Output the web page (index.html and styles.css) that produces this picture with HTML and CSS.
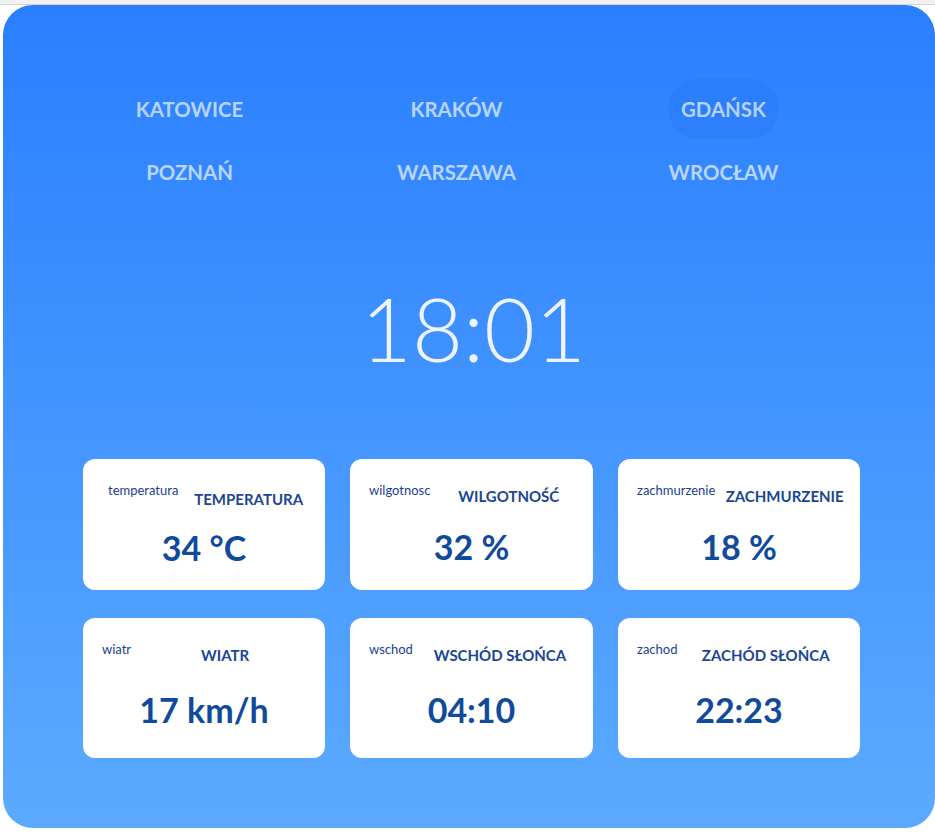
FILE: index.html
```html
<!DOCTYPE html>
<html lang="pl">
<head>
<meta charset="utf-8">
<title>Pogoda</title>
<link rel="stylesheet" href="styles.css">
</head>
<body>
<div class="topbar"></div>
<main class="app">
  <nav class="cities">
    <a class="city">KATOWICE</a>
    <a class="city">KRAKÓW</a>
    <a class="city city--active">GDAŃSK</a>
    <a class="city">POZNAŃ</a>
    <a class="city">WARSZAWA</a>
    <a class="city">WROCŁAW</a>
  </nav>
  <div class="clock">18:01</div>
  <section class="tiles">
    <div class="tile tile--temp">
      <div class="tile-head"><span class="icon-alt">temperatura</span><h3>TEMPERATURA</h3></div>
      <div class="tile-value">34 °C</div>
    </div>
    <div class="tile">
      <div class="tile-head"><span class="icon-alt">wilgotnosc</span><h3>WILGOTNOŚĆ</h3></div>
      <div class="tile-value">32 %</div>
    </div>
    <div class="tile">
      <div class="tile-head"><span class="icon-alt">zachmurzenie</span><h3>ZACHMURZENIE</h3></div>
      <div class="tile-value">18 %</div>
    </div>
    <div class="tile">
      <div class="tile-head"><span class="icon-alt">wiatr</span><h3>WIATR</h3></div>
      <div class="tile-value">17 km/h</div>
    </div>
    <div class="tile">
      <div class="tile-head"><span class="icon-alt">wschod</span><h3>WSCHÓD SŁOŃCA</h3></div>
      <div class="tile-value">04:10</div>
    </div>
    <div class="tile">
      <div class="tile-head"><span class="icon-alt">zachod</span><h3>ZACHÓD SŁOŃCA</h3></div>
      <div class="tile-value">22:23</div>
    </div>
  </section>
</main>
</body>
</html>
```
FILE: styles.css
```css
* { box-sizing: border-box; }
html, body { margin: 0; padding: 0; background: #fff; }
body { font-family: Lato, "Open Sans", sans-serif; }

.topbar {
  height: 5px;
  background: #f1f1f1;
  border-bottom: 1px solid #d6d6d6;
}

.app {
  margin-left: 3px;
  width: 932px;
  height: 823px;
  border-radius: 30px;
  background: linear-gradient(to bottom, #2a7fff 0%, #5caaff 100%);
  padding: 74px 0 0 0;
  overflow: hidden;
}

.cities {
  display: grid;
  grid-template-columns: repeat(3, 267px);
  grid-auto-rows: 60px;
  row-gap: 3px;
  margin-left: 53px;
}

.city {
  justify-self: center;
  align-self: center;
  font-size: 20.4px;
  font-weight: 700;
  line-height: 24px;
  padding: 18px 13px;
  border-radius: 30px;
  color: rgba(255, 255, 255, 0.66);
  cursor: pointer;
}

.city--active {
  background: rgba(20, 90, 220, 0.12);
}

.clock {
  margin-top: 74px;
  text-align: center;
  font-size: 88px;
  line-height: 1.2;
  font-weight: 300;
  color: rgba(255, 255, 255, 0.9);
  padding-left: 9px;
}

.tiles {
  margin: 77px 0 0 80px;
  width: 777px;
  display: grid;
  grid-template-columns: 242px 243px 242px;
  grid-template-rows: 131px 140px;
  column-gap: 25px;
  row-gap: 28px;
}

.tile {
  background: #fff;
  border-radius: 12px;
  display: flex;
  flex-direction: column;
  color: #0d47a1;
}

.tile-head {
  display: flex;
  align-items: flex-start;
  padding: 23px 6px 0 19px;
}

.icon-alt {
  font-size: 13px;
  line-height: 16px;
  color: #1a3f8f;
}

.tile-head h3 {
  flex: 1;
  margin: 5px 0 0 0;
  text-align: center;
  font-size: 15px;
  line-height: 18px;
  font-weight: 700;
  color: #1b4595;
}

.tile--temp .icon-alt { margin-left: 6px; }
.tile--temp .tile-head h3 { margin-top: 8px; }

.tile-value {
  flex: 1;
  display: flex;
  align-items: center;
  justify-content: center;
  font-size: 34px;
  font-weight: 700;
  color: #0f4a9c;
  padding-bottom: 2px;
}
```
